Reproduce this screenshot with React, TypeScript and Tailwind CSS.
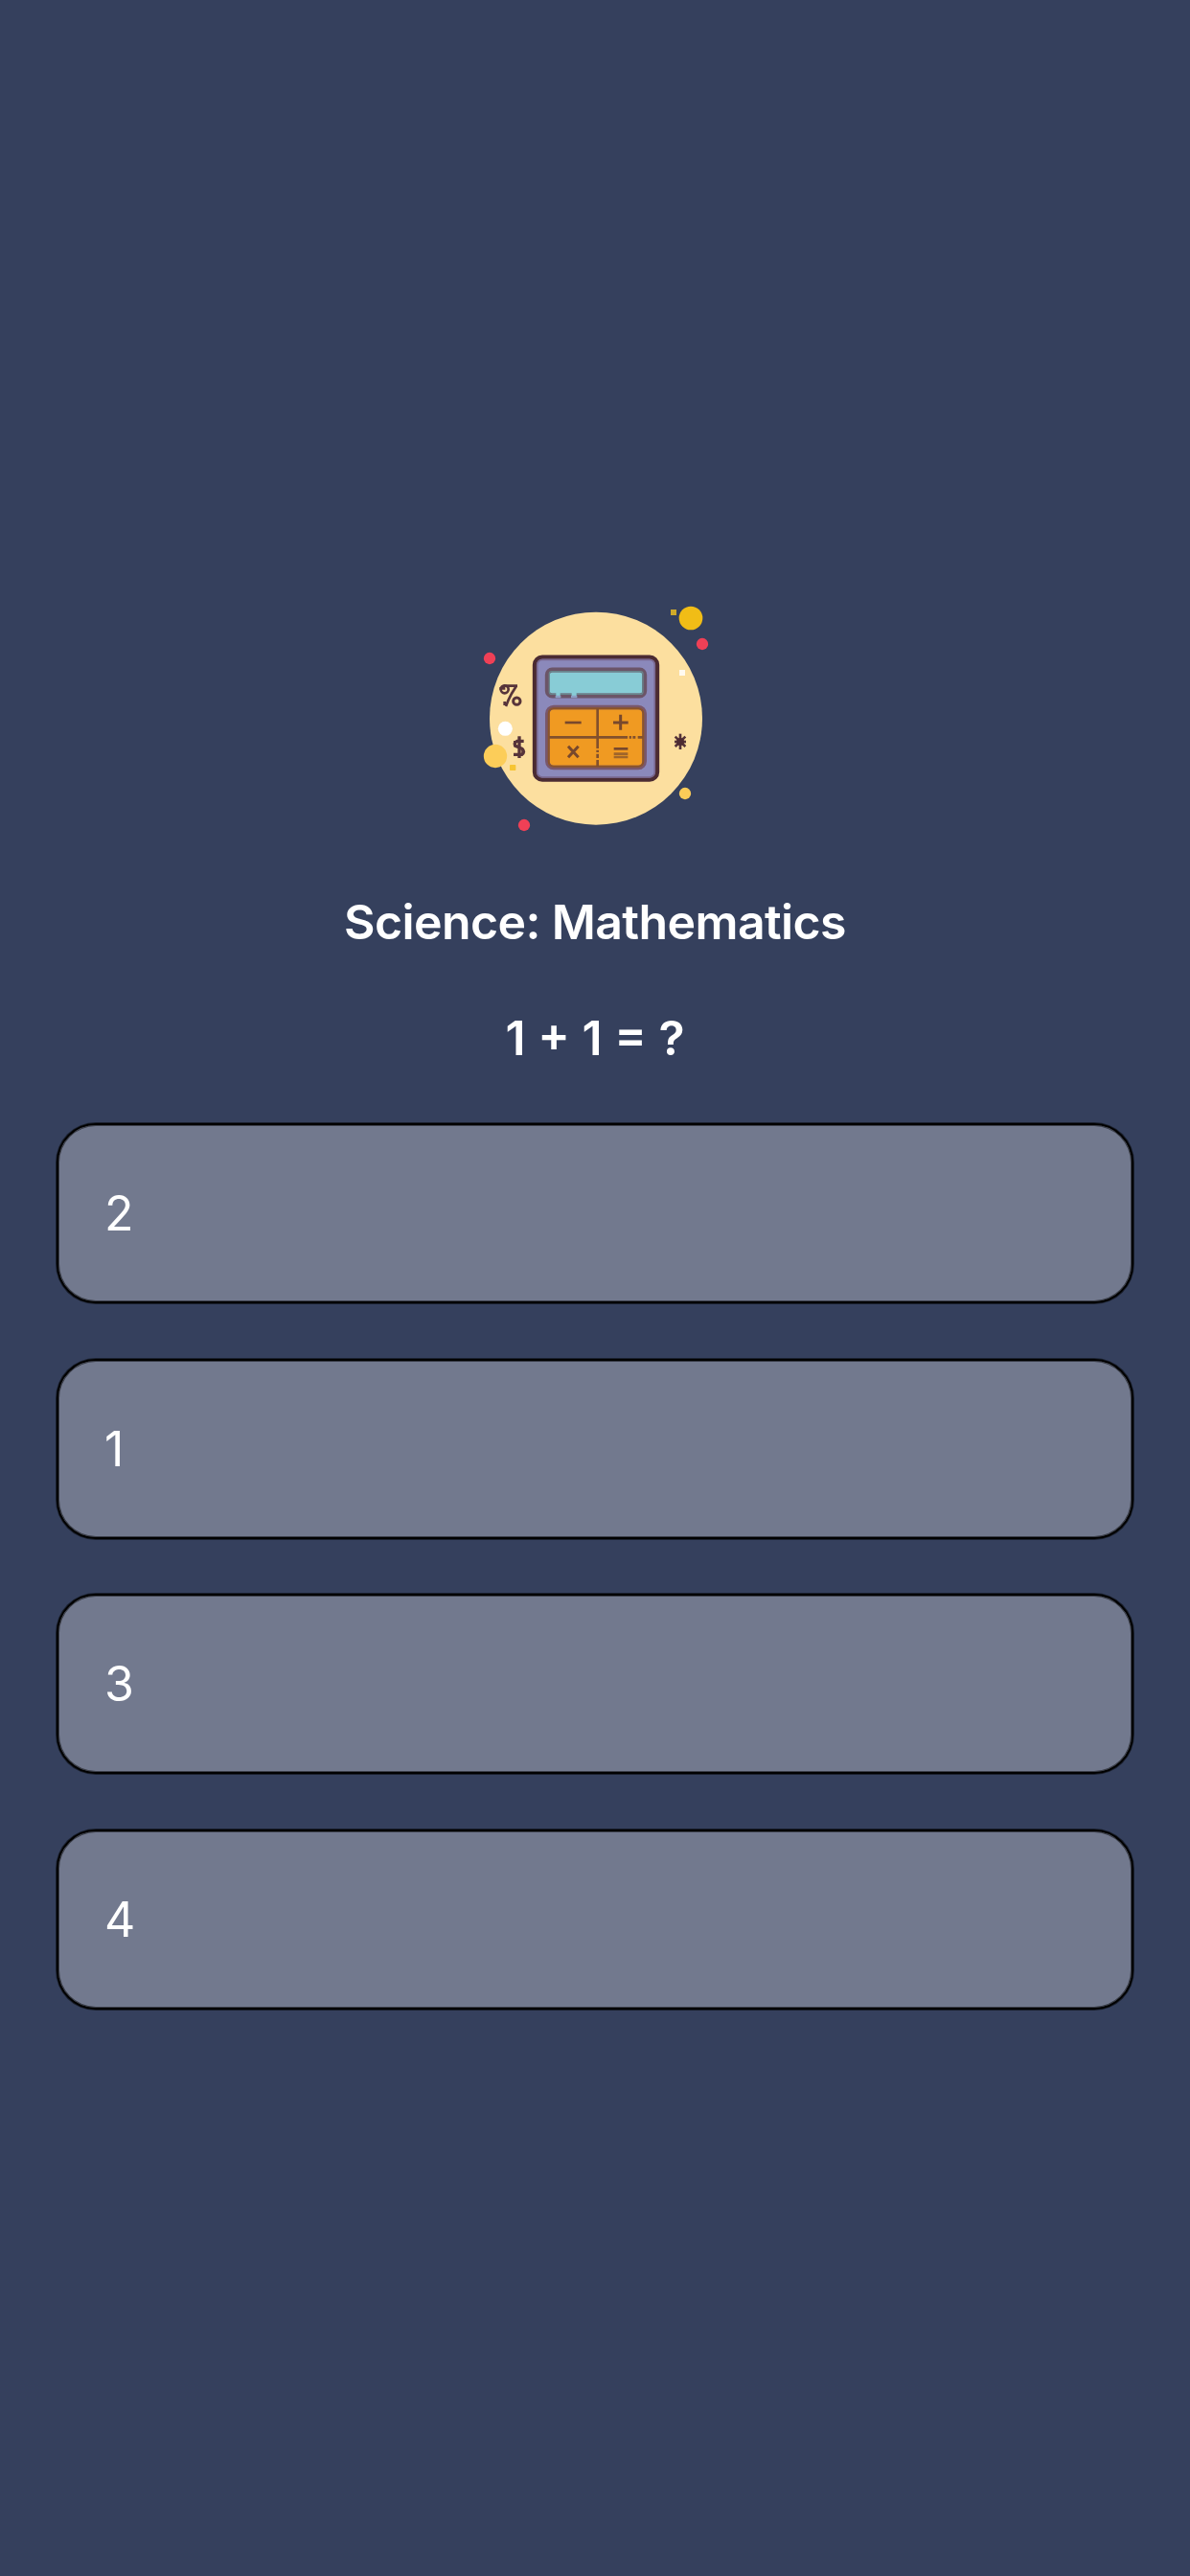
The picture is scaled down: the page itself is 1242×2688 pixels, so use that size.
const answers = ["2", "1", "3", "4"];

function CalculatorIcon() {
  return (
    <svg viewBox="0 0 780 780" className="size-[260px] shrink-0 blur-[0.6px]" fill="none" aria-label="Mathematics">
      <circle cx="393" cy="389" r="333" fill="#fcdf9f" />
      <circle cx="690" cy="75" r="37" fill="#f1bd16" />
      <rect x="627" y="48" width="18" height="18" fill="#d0aa2a" />
      <circle cx="726" cy="156" r="18.5" fill="#ef4056" />
      <circle cx="60" cy="201" r="18.5" fill="#ef4056" />
      <circle cx="168" cy="723" r="18.5" fill="#ef4056" />
      <circle cx="672" cy="624" r="18.5" fill="#fbcc58" />
      <rect x="654" y="237" width="18" height="18" fill="#fffaf0" />
      <circle cx="109" cy="421" r="22.5" fill="#fff" />
      <circle cx="78" cy="507" r="36.5" fill="#fccd59" />
      <rect x="123" y="534" width="19" height="18" rx="2" fill="#f6c533" />

      {/* calculator body */}
      <rect x="201" y="197" width="384" height="384" rx="24" fill="#8b89bb" stroke="#4b2b32" strokeWidth="13" />
      <rect x="209" y="205" width="368" height="368" rx="16" stroke="#79678f" strokeWidth="5" />

      {/* display */}
      <rect x="241" y="237" width="304" height="81" rx="15" fill="#88ccd6" stroke="#6b5568" strokeWidth="15" />
      <rect x="247" y="242" width="293" height="71" rx="8" stroke="#68858c" strokeWidth="4" />
      <path d="M268 314h13M317 314h15" stroke="#88ccd6" strokeWidth="13" />
      <path d="M266 321h17M315 321h19" stroke="#8b9fc5" strokeWidth="7" />

      {/* keypad */}
      <rect x="241" y="354" width="304" height="189" rx="20" fill="#f09a22" stroke="#79576b" strokeWidth="14" />
      <rect x="245" y="358" width="296" height="181" rx="15" stroke="#8b5429" strokeWidth="6" />
      <path d="M398 358v90M246 448h246M497 448h7M508 448h9M524 448h16M398 448v35M398 488v7M398 500v13M398 519v21" stroke="#82502c" strokeWidth="8" />
      <g stroke="#78482c" strokeWidth="8">
        <path d="M296 402h51" />
        <path d="M447 402h47M470 377v48" strokeWidth="9" />
        <path d="M306 476l32 35M338 476l-32 35" strokeWidth="9" />
        <path d="M449 484h44" />
        <path d="M449 500h44M449 510h44" stroke="#a0652a" strokeWidth="8" />
      </g>

      {/* symbols beside the calculator */}
      <g stroke="#57343a" strokeWidth="8">
        <circle cx="107" cy="298" r="12" />
        <path d="M91 295h18M104 287h43M143 289l-14 22-10 20-8 20" />
        <circle cx="145" cy="335" r="11" strokeWidth="9" />
        <path d="M107 348v-12" />
        <path d="M167 460h-21q-12 7-5 15l21 9q10 10-1 18h-26M153 445v68" strokeWidth="10" />
        <path d="M139 459v19M164 483v18" strokeWidth="8" />
      </g>
      <g stroke="#55343a" strokeWidth="8">
        <path d="M657 437v49" />
        <path d="M641 446l32 31M673 446l-32 31" />
        <path d="M639 462h36" />
        <circle cx="657" cy="462" r="12" fill="#4d2b32" stroke="none" />
      </g>
    </svg>
  );
}

export default function App() {
  return (
    <main className="flex h-[2688px] w-[1242px] flex-col items-center bg-[#35405d] pt-[620px] font-['Inter',sans-serif] text-white">
      <CalculatorIcon />
      <h1 className="mt-[50px] text-[50px] leading-[64px] font-semibold tracking-[-0.6px] whitespace-nowrap">
        Science: Mathematics
      </h1>
      <h2 className="mt-[57px] text-[50px] leading-[64px] font-semibold whitespace-nowrap">
        1 + 1 = ?
      </h2>
      <div className="mt-[57px] flex w-[1124px] flex-col gap-[57.5px]">
        {answers.map((answer) => (
          <button
            key={answer}
            className="flex h-[188px] items-center rounded-[41px] border-2 border-black bg-[#72798e] pl-[48px] text-left text-[50px] leading-[60px] shadow-[0_0_0_1px_rgba(0,0,0,0.5),inset_0_0_0_1px_rgba(0,0,0,0.5)]"
          >
            {answer}
          </button>
        ))}
      </div>
    </main>
  );
}
